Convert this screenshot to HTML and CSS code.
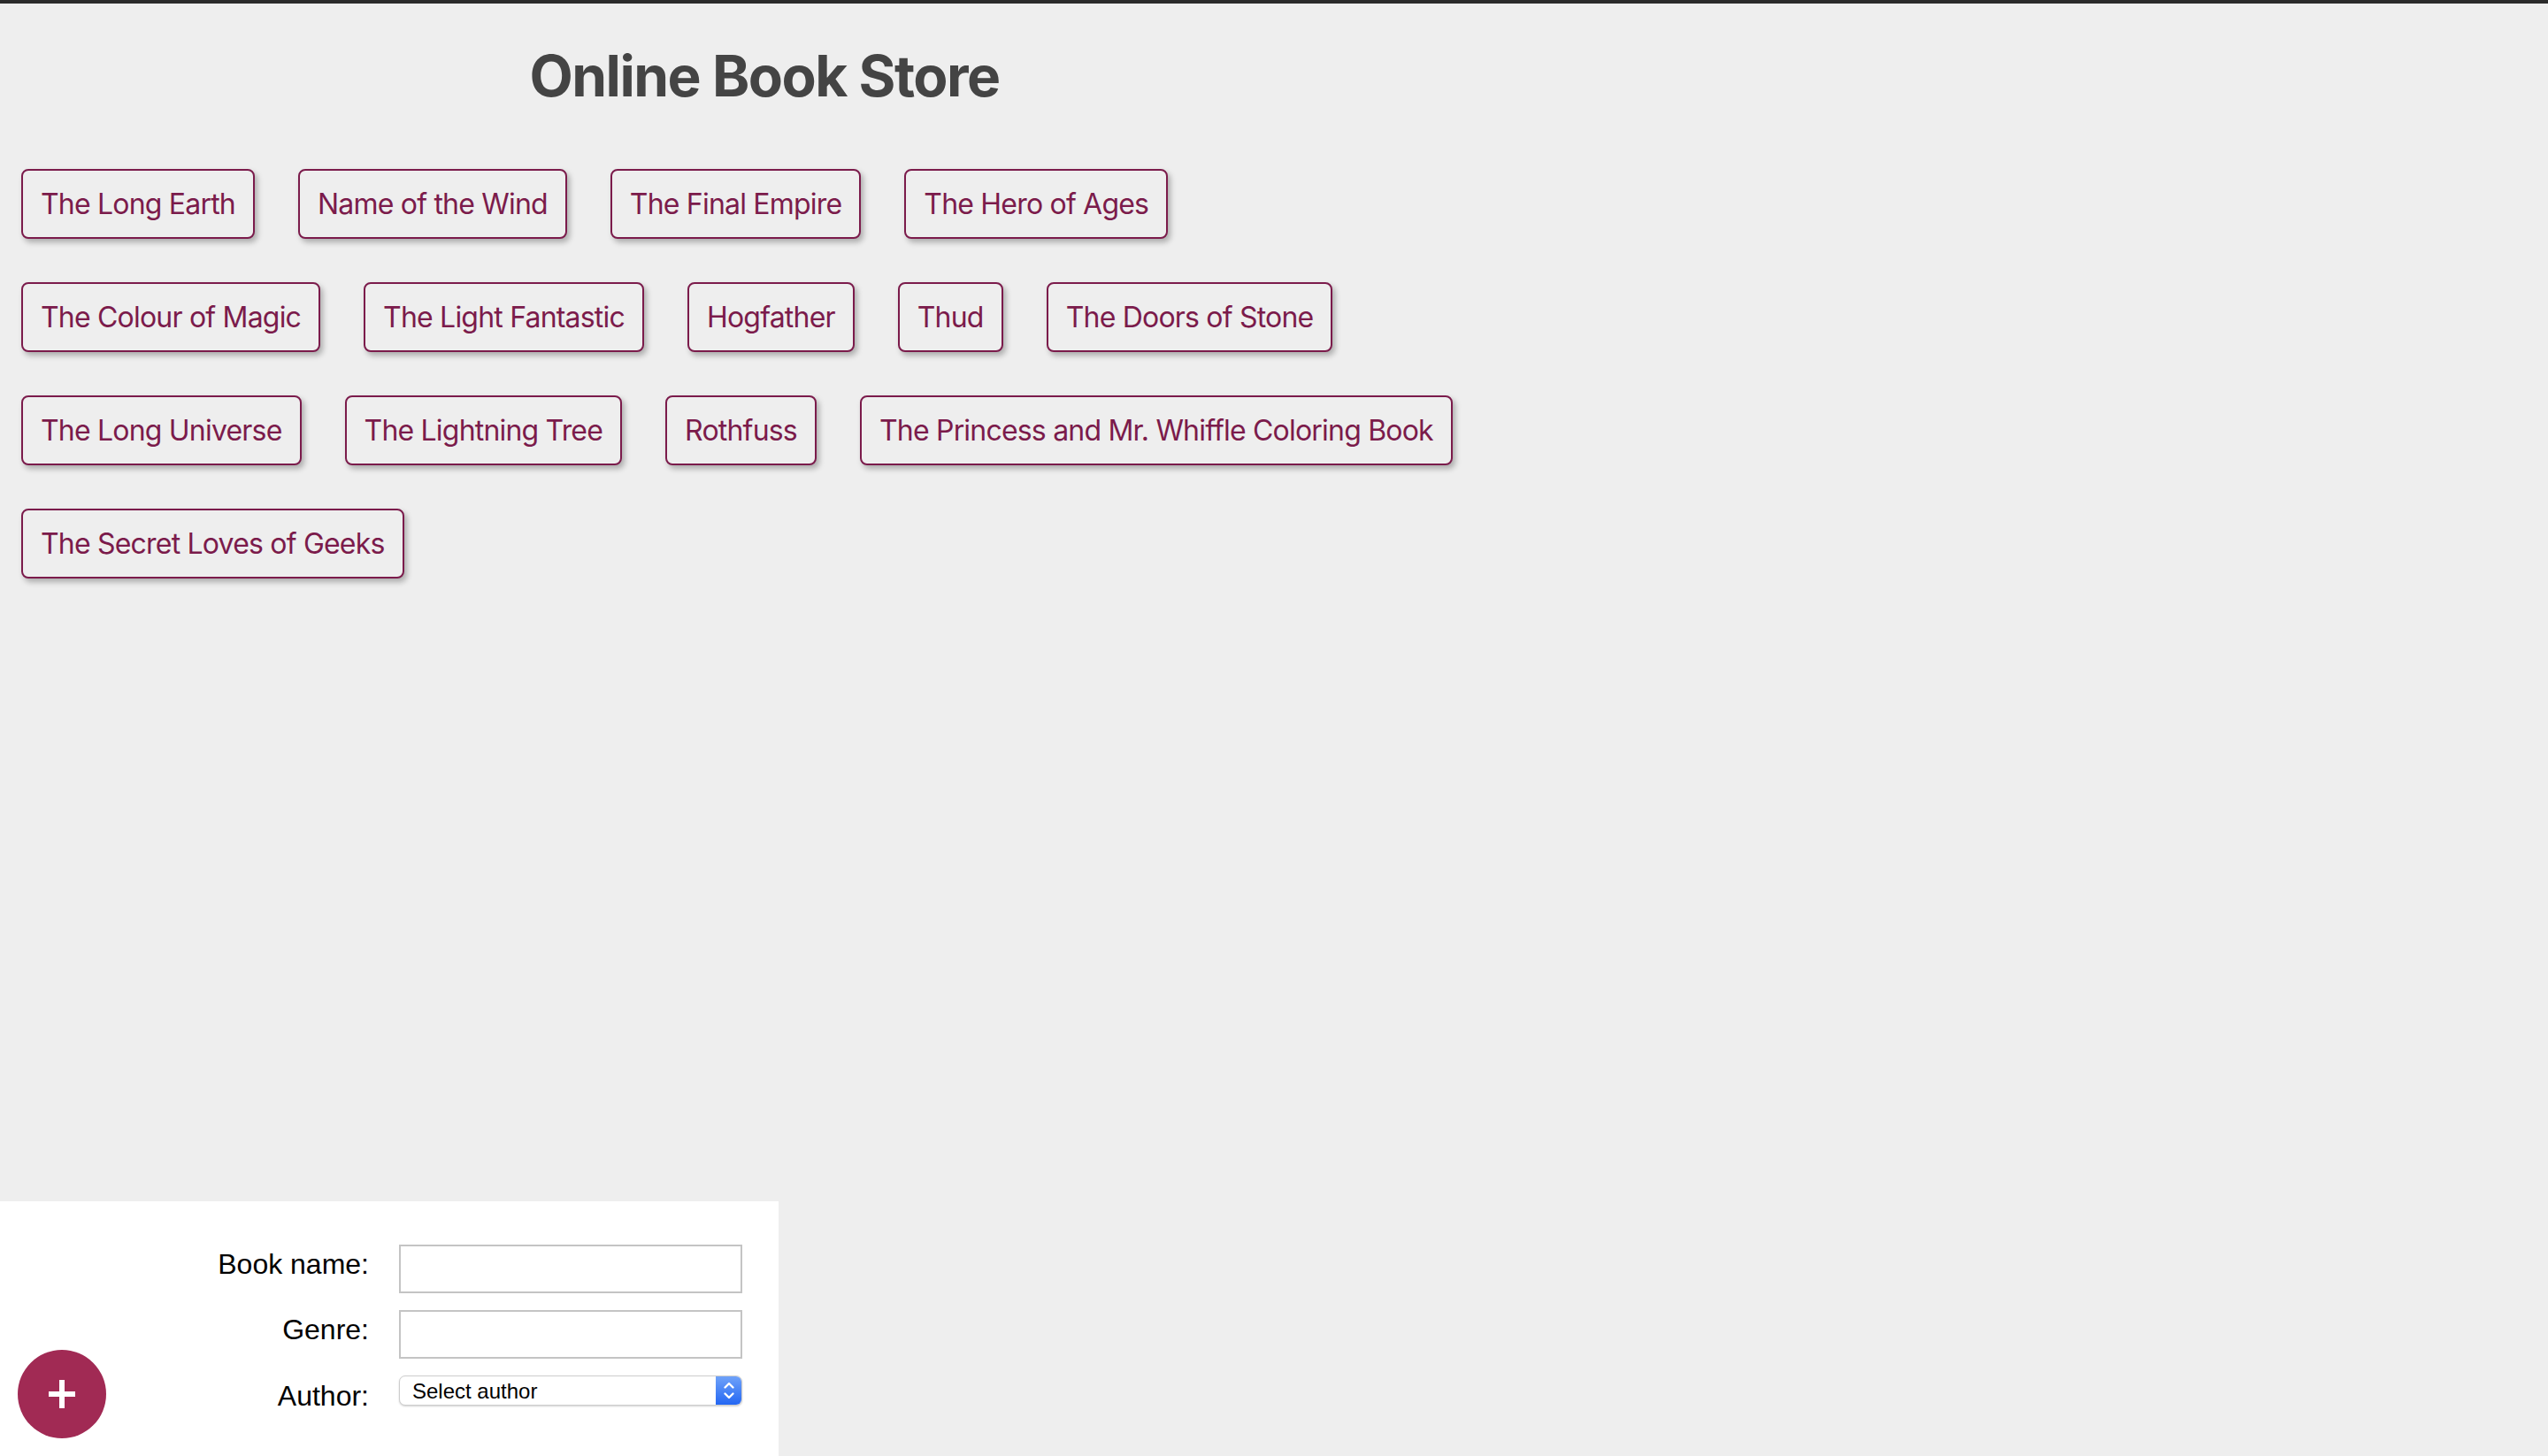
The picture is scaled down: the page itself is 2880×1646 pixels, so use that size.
FILE: index.html
```html
<!DOCTYPE html>
<html lang="en">
<head>
<meta charset="utf-8">
<title>Online Book Store</title>
<link rel="stylesheet" href="styles.css">
</head>
<body>
<div class="app">
  <div class="topbar"></div>
  <main class="main">
    <header class="header"><h1 class="title">Online Book Store</h1></header>
    <ul class="book-list">
      <li><button class="book" type="button">The Long Earth</button></li>
      <li><button class="book" type="button">Name of the Wind</button></li>
      <li><button class="book" type="button">The Final Empire</button></li>
      <li><button class="book" type="button">The Hero of Ages</button></li>
      <li><button class="book" type="button">The Colour of Magic</button></li>
      <li><button class="book" type="button">The Light Fantastic</button></li>
      <li><button class="book" type="button">Hogfather</button></li>
      <li><button class="book" type="button">Thud</button></li>
      <li><button class="book" type="button">The Doors of Stone</button></li>
      <li><button class="book" type="button">The Long Universe</button></li>
      <li><button class="book" type="button">The Lightning Tree</button></li>
      <li><button class="book" type="button">Rothfuss</button></li>
      <li><button class="book" type="button">The Princess and Mr. Whiffle Coloring Book</button></li>
      <li><button class="book" type="button">The Secret Loves of Geeks</button></li>
    </ul>
  </main>
  <section class="panel">
    <form class="book-form">
      <label class="field-label" for="book-name">Book name:</label>
      <input class="field-input" id="book-name" type="text">
      <label class="field-label" for="genre">Genre:</label>
      <input class="field-input" id="genre" type="text">
      <label class="field-label field-label-select" for="author">Author:</label>
      <div class="select-wrap">
        <select class="field-select" id="author">
          <option>Select author</option>
        </select>
        <span class="stepper">
          <svg width="14" height="22" viewBox="0 0 14 22" fill="none" stroke="#fff" stroke-width="2.4" stroke-linecap="round" stroke-linejoin="round">
            <polyline points="2.5,7.5 7,3 11.5,7.5"/>
            <polyline points="2.5,14.5 7,19 11.5,14.5"/>
          </svg>
        </span>
      </div>
    </form>
  </section>
  <button class="fab" type="button" aria-label="Add book">
    <svg width="32" height="32" viewBox="0 0 32 32">
      <rect x="1" y="13" width="30" height="6" fill="#fff"/>
      <rect x="13" y="0" width="6" height="32" fill="#fff"/>
    </svg>
  </button>
</div>
</body>
</html>
```

FILE: styles.css
```css
* {
  box-sizing: border-box;
}

html,
body {
  margin: 0;
  padding: 0;
}

body {
  background: #eeeeee;
  font-family: Inter, "Noto Sans", sans-serif;
}

.app {
  min-height: 100vh;
  display: flex;
  flex-direction: column;
}

.topbar {
  flex: none;
  height: 4px;
  background: #2a2a2a;
}

.main {
  width: 60%;
}

.header {
  padding-top: 43px;
  text-align: center;
}

.title {
  margin: 0;
  font-size: 64px;
  line-height: 77px;
  font-weight: 700;
  letter-spacing: -1.5px;
  color: #444444;
}

.book-list {
  list-style: none;
  margin: 0;
  padding: 67px 24px 0 24px;
  display: flex;
  flex-wrap: wrap;
  gap: 49px 49px;
}

.book {
  display: block;
  margin: 0;
  padding: 18px 20px;
  font-family: Inter, "Noto Sans", sans-serif;
  font-size: 32px;
  line-height: 39px;
  letter-spacing: -0.8px;
  color: #7b1b4b;
  background: #eeeeee;
  border: 2px solid #7b1b4b;
  border-radius: 8px;
  box-shadow: 3px 4px 6px rgba(0, 0, 0, 0.28);
  cursor: pointer;
  white-space: nowrap;
}

.panel {
  margin-top: auto;
  width: 880px;
  background: #ffffff;
  padding: 49px 41px 57px 0;
}

.book-form {
  display: grid;
  grid-template-columns: 417px 388px;
  grid-template-rows: 55px 55px 34px;
  column-gap: 34px;
  row-gap: 19px;
  align-items: start;
}

.field-label {
  justify-self: end;
  padding-top: 4px;
  font-family: "Liberation Sans", Arial, sans-serif;
  font-size: 32px;
  line-height: 37px;
  color: #000000;
}

.field-label-select {
  padding-top: 5px;
}

.field-input {
  display: block;
  width: 388px;
  height: 55px;
  margin: 0;
  padding: 0 10px;
  border: 2px solid #c4c4c4;
  background: #ffffff;
  font-family: "Liberation Sans", Arial, sans-serif;
  font-size: 32px;
}

.select-wrap {
  display: flex;
  width: 388px;
  height: 34px;
  border: 1px solid #cdcdcd;
  border-radius: 7px;
  background: #ffffff;
  overflow: hidden;
  box-shadow: 0 1px 2px rgba(0, 0, 0, 0.18);
}

.field-select {
  flex: 1;
  min-width: 0;
  height: 100%;
  margin: 0;
  padding: 0 0 0 14px;
  border: 0;
  background: transparent;
  -webkit-appearance: none;
  appearance: none;
  font-family: "Liberation Sans", Arial, sans-serif;
  font-size: 24px;
  color: #000000;
}

.stepper {
  flex: none;
  width: 29px;
  display: flex;
  align-items: center;
  justify-content: center;
  background: linear-gradient(#6fa2f9, #2467f3);
}

.fab {
  position: fixed;
  left: 20px;
  bottom: 20px;
  width: 100px;
  height: 100px;
  padding: 0;
  border: 0;
  border-radius: 50%;
  background: #a12a54;
  display: flex;
  align-items: center;
  justify-content: center;
  cursor: pointer;
}
```
